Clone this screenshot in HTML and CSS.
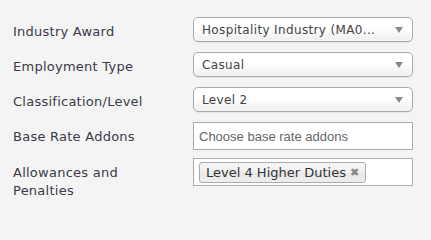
FILE: index.html
```html
<!DOCTYPE html>
<html>
<head>
<meta charset="utf-8">
<link rel="stylesheet" href="styles.css">
</head>
<body>
<div class="form">
  <div class="row">
    <div class="label">Industry Award</div>
    <div class="select"><span class="value">Hospitality Industry (MA0...</span><span class="arrow"></span></div>
  </div>
  <div class="row">
    <div class="label">Employment Type</div>
    <div class="select"><span class="value">Casual</span><span class="arrow"></span></div>
  </div>
  <div class="row">
    <div class="label">Classification/Level</div>
    <div class="select"><span class="value">Level 2</span><span class="arrow"></span></div>
  </div>
  <div class="row row-input">
    <div class="label">Base Rate Addons</div>
    <div class="input"><span class="placeholder">Choose base rate addons</span></div>
  </div>
  <div class="row row-input">
    <div class="label">Allowances and<br>Penalties</div>
    <div class="input multi"><span class="tag">Level 4 Higher Duties <span class="close">&#x2716;</span></span></div>
  </div>
</div>
</body>
</html>
```

FILE: styles.css
```css
html, body {
  margin: 0;
  padding: 0;
  background: #f4f4f4;
}
body {
  font-family: "DejaVu Sans", Verdana, sans-serif;
  font-size: 13px;
  color: #333;
}
.form {
  padding: 17px 0 0 13px;
  display: flex;
  flex-direction: column;
}
.row {
  display: grid;
  grid-template-columns: 180px 220px;
  align-items: start;
  margin-bottom: 10px;
}
.row-input {
  margin-bottom: 8px;
}
.label {
  padding-top: 6px;
  line-height: 18px;
  color: #3a3a48;
  letter-spacing: 0.25px;
}
.select {
  box-sizing: border-box;
  height: 25px;
  border: 1px solid #aaa;
  border-radius: 5px;
  background: linear-gradient(#ffffff 0%, #ffffff 45%, #eeeeee 100%);
  display: flex;
  align-items: center;
  justify-content: space-between;
  padding: 0 9px 0 8px;
  box-shadow: 0 0 3px #fff inset, 0 1px 1px rgba(0,0,0,0.06);
}
.value {
  color: #444;
  font-size: 12px;
  letter-spacing: 0.35px;
  white-space: nowrap;
}
.arrow {
  width: 0;
  height: 0;
  border-left: 4px solid transparent;
  border-right: 4px solid transparent;
  border-top: 6px solid #888;
  margin-top: 1px;
}
.input {
  box-sizing: border-box;
  height: 28px;
  border: 1px solid #aaa;
  background: #fff;
  display: flex;
  align-items: center;
  padding: 0 5px;
}
.placeholder {
  font-family: "Liberation Sans", Arial, sans-serif;
  font-size: 13px;
  color: #666;
}
.multi {
  padding: 0 5px;
}
.tag {
  box-sizing: border-box;
  height: 21px;
  border: 1px solid #aaa;
  border-radius: 3px;
  background: linear-gradient(#f4f4f4 20%, #f0f0f0 50%, #e8e8e8 52%, #eeeeee 100%);
  display: flex;
  align-items: center;
  padding: 0 6px;
  color: #333;
  white-space: nowrap;
}
.close {
  font-size: 11px;
  color: #888;
  margin-left: 4px;
}
```
